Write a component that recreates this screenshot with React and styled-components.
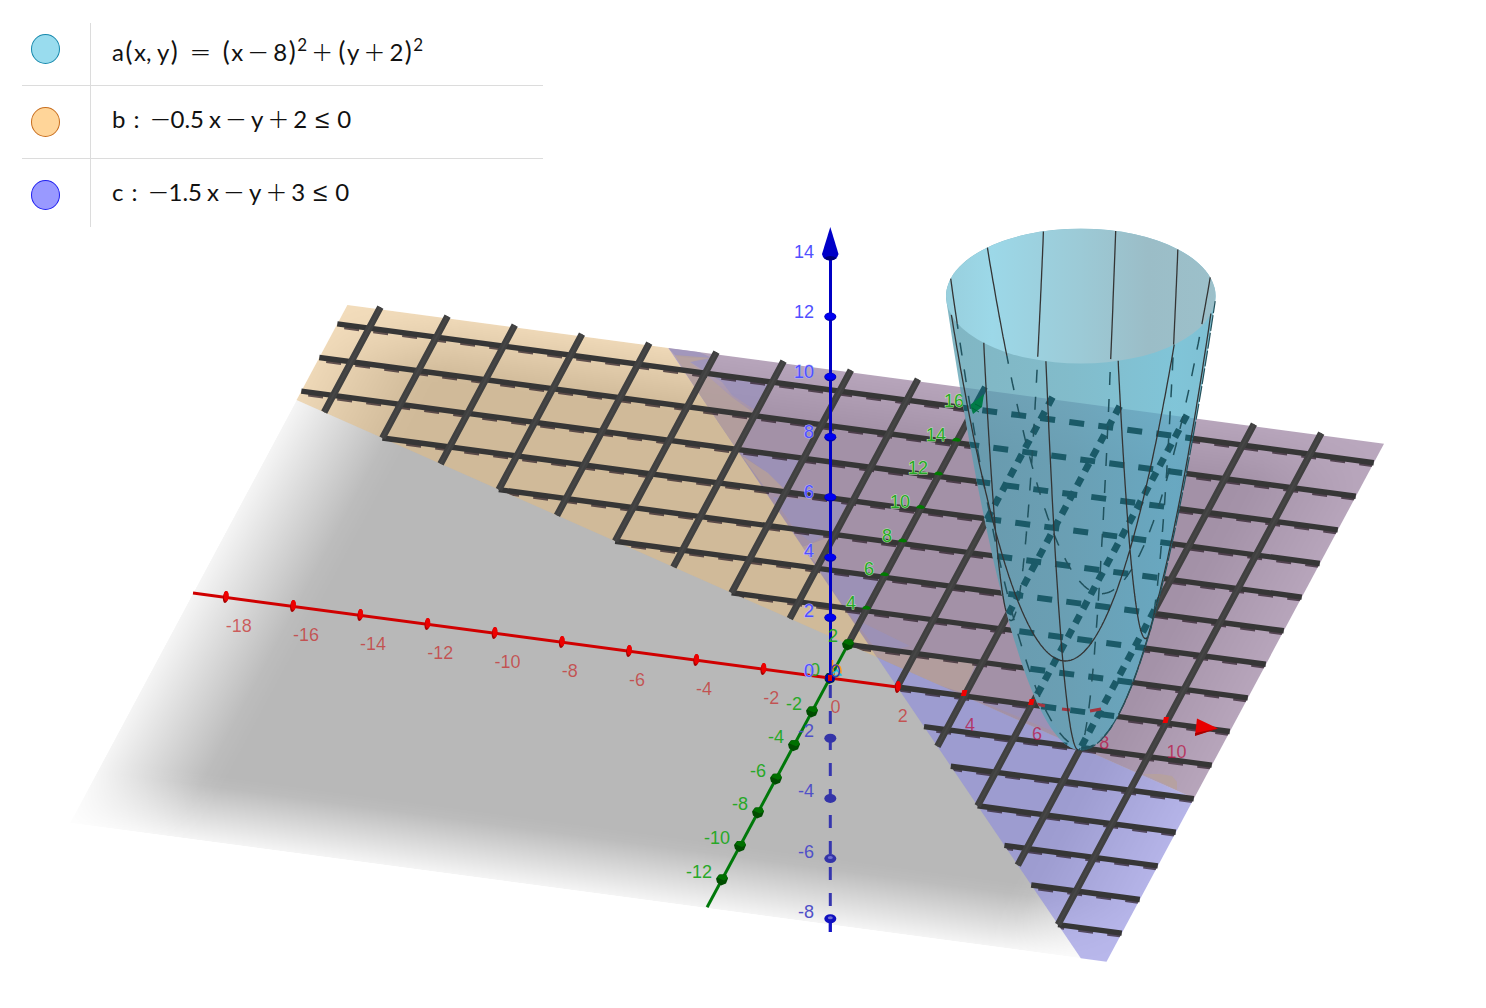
import React from "react";
import styled, { createGlobalStyle } from "styled-components";

const GlobalStyle = createGlobalStyle`
  body { margin: 0; background: #fff; }
`;

const Page = styled.main`
  display: grid;
  min-height: 100vh;
  align-items: start;
  overflow: hidden;
`;

const Scene = styled.svg`
  grid-area: 1 / 1;
  display: block;
  width: 100%;
  height: auto;
`;

const Legend = styled.ul`
  grid-area: 1 / 1;
  z-index: 1;
  width: 521px;
  margin: 23px 0 0 22px;
  padding: 0;
  list-style: none;
`;

const LegendRow = styled.li`
  display: flex;
  border-bottom: 1px solid #dcdcdc;
  &:last-child { border-bottom: 0; }
`;

const MarkerCell = styled.div`
  box-sizing: border-box;
  width: 69px;
  padding: 21px 0 21px 9px;
  border-right: 1px solid #dcdcdc;
  ${LegendRow}:first-child & { padding-top: 11px; }
  ${LegendRow}:last-child & { padding-bottom: 17px; }
`;

const Marker = styled.button`
  display: block;
  box-sizing: border-box;
  width: 29px;
  height: 30px;
  padding: 0;
  border: 1px solid ${(p) => p.$edge};
  border-radius: 50%;
  background: ${(p) => p.$fill};
`;

const Formula = styled.div`
  display: flex;
  align-items: baseline;
  align-self: flex-start;
  padding: 17px 0 0 21px;
  color: #111;
  font: 24px/32px Lato, "Open Sans", sans-serif;
  white-space: pre;
  ${LegendRow}:first-child & { padding-top: 12px; }
`;

const Op = styled.span`
  width: 18px;
  margin: 0 ${(p) => (p.$wide ? 12 : 6)}px;
  font-family: "DejaVu Sans", sans-serif;
  font-size: 26px;
  font-weight: 200;
  display: flex;
  justify-content: center;
`;

const Sign = styled(Op)`
  margin: 0 1px 0 12px;
`;

const Thin = styled.span`
  margin-left: ${(p) => (p.$colon ? 8 : 5)}px;
`;

const Paren = styled.span`
  width: 10px;
  font-size: 26px;
  text-align: center;
`;

const Power = styled.sup`
  align-self: flex-start;
  font-size: 17px;
  line-height: 20px;
`;

const Tag = styled.text`
  font: 18px "Liberation Sans", Arial, sans-serif;
  fill: ${(p) => p.$color};
  stroke: ${(p) => p.$halo || "none"};
  stroke-width: 1px;
  paint-order: stroke;
`;

/* ---- projection ---- */
const X0 = -18.95, X1 = 11.9, Y0 = -13.7, Y1 = 17.13, ZU = 30.1;
const proj = (x, y, z = 0) => [830 + 33.6 * x + 9 * y, 678 + 4.5 * x - 16.8 * y - ZU * z];
const fmt = ([x, y]) => `${x.toFixed(1)},${y.toFixed(1)}`;
const line = (a, b) => `M${fmt(a)}L${fmt(b)}`;
const evens = (a, b) => {
  const out = [];
  for (let i = a; i <= b; i += 2) out.push(i);
  return out;
};

const startX = (y) => Math.max(X0, Math.min(4 - 2 * y, (3 - y) / 1.5));
const startY = (x) => Math.max(Y0, Math.min(2 - 0.5 * x, 3 - 1.5 * x));

const rows = evens(-12, 16).map((y) => ({
  from: proj(startX(y), y),
  edge: proj(X0, y),
  to: proj(X1, y),
}));
const rowPath = rows.map((r) => line(r.from, r.to)).join("");
const columnPath = evens(-18, 10).map((x) => line(proj(x, 17.25), proj(x, startY(x)))).join("");

/* ---- paraboloid ---- */
const CX = 1080.8, VY = 747.6, R = Math.sqrt(15);
const rimY = VY - ZU * 15, RX = 34.8 * R, RY = 17.4 * R;
const silhouette = (() => {
  const w = Math.sqrt(15 - 0.0835);
  const pts = [];
  for (let i = -40; i <= 40; i++) {
    const k = (w * i) / 40;
    pts.push([CX + 34.8 * k, 750.1 - ZU * k * k]);
  }
  return pts;
})();
const bodyPath = `M${silhouette.map(fmt).join("L")}A${RX} ${RY} 0 1 0 ${fmt(silhouette[0])}Z`;
const edgePath = `M${silhouette.slice(40).map(fmt).join("L")}`;

const meshPaths = (() => {
  const solid = [], dashed = [];
  const trace = (point) => {
    let run = null, runVisible = null;
    const flush = () => {
      if (run && run.length > 1) (runVisible ? solid : dashed).push(`M${run.map(fmt).join("L")}`);
    };
    for (let i = 0; i <= 240; i++) {
      const [a, b] = point(i / 240);
      const px = CX + 33.6 * a + 9 * b;
      const py = VY + 4.5 * a - 16.8 * b - ZU * (a * a + b * b);
      const front = (4.5 * a - 16.8 * b) / 17.4 > 0.289;
      const inRim = ((px - CX) / RX) ** 2 + ((py - rimY) / RY) ** 2 < 1.001;
      const visible = front || inRim;
      if (visible !== runVisible) {
        const prev = run && run[run.length - 1];
        flush();
        run = prev ? [prev] : [];
        runVisible = visible;
      }
      run.push([px, py]);
    }
    flush();
  };
  [-2, 0, 2].forEach((k) => {
    const h = Math.sqrt(15 - k * k);
    trace((t) => [k, h - 2 * h * t]);
    trace((t) => [h - 2 * h * t, k]);
  });
  return { solid: solid.join(""), dashed: dashed.join("") };
})();

const overlapPoly = [[-9.4, Y1], [X1, Y1], [X1, -3.975], [1, 1.5]];
const orangePoly = [[X0, Y1], [-9.4, Y1], [1, 1.5], [X0, 11.475]];
const bluePoly = [[1, 1.5], [X1, -3.975], [X1, Y0], [11.133, Y0]];
const poly = (p) => p.map(([x, y]) => fmt(proj(x, y))).join(" ");

const violetPatches = [
  "668,348 697,351 712,358 690,358 676,356",
  "690,362 714,356 708,373 772,383 758,412 732,395 722,382 703,370",
  "740,453 803,458 783,488 767,473",
  "773,497 847,503 833,530 812,543 795,530",
  "820,570 880,578 864,607 857,620 910,646 897,649 880,655 838,598",
  "970,697 1037,705 1062,735",
];
const brownPatches = [
  "675,355 712,358 690,362 703,372 733,398 754,413 740,453 712,415 690,380",
  "742,456 768,473 785,490 765,488",
  "802,547 830,537 820,568",
  "857,649 897,649 976,663 963,693 920,679 877,657",
  "1143,774 1160,774 1172,776 1177,782 1177,790",
];

function Grid() {
  return (
    <g fill="none" mask="url(#outsideShell)">
      <g stroke="#2c1e28" strokeOpacity="0.72" strokeWidth="3" clipPath="url(#gridArea)">
        {rows.map((r) => (
          <path
            key={r.edge[1]}
            transform="translate(0 3)"
            strokeDasharray="15 14.26"
            strokeDashoffset="-7"
            d={line(r.edge, r.to)}
          />
        ))}
      </g>
      <path d={rowPath} stroke="#363636" strokeWidth="5.4" />
      <path d={columnPath} stroke="#404040" strokeWidth="6.8" />
      <path d={columnPath} stroke="#464646" strokeWidth="2" />
    </g>
  );
}

function Axes() {
  return (
    <g>
      <path d={line(proj(0, 2), proj(0, -13.65))} stroke="#00780a" strokeWidth="3" />
      {evens(-12, 2).map((k) => {
        const [x, y] = proj(0, k);
        return (
          <g key={k} transform={`translate(${x} ${y})`}>
            <path d="M-6,-1L-3,-5L4,-5L6,-1L4,4L-1,6L-5,3Z" fill="#004d00" />
            <path d="M-5,-2L-2,-5L4,-5L6,-1L2,1Z" fill="#007000" />
          </g>
        );
      })}
      {evens(4, 14).map((k) => {
        const [x, y] = proj(0, k);
        return <path key={k} d={`M${x - 4},${y - 2}q1,-3 4,-3q4,0 5,3l-3,1z`} fill="#007a00" />;
      })}
      <path d="M830.3,685V932" stroke="#3636ae" strokeWidth="3" strokeDasharray="13 13" />
      <path d="M830.3,918V932" stroke="#1414c8" strokeWidth="3" />
      {evens(-8, -2).map((k) => {
        const y = proj(0, 0, k)[1];
        return (
          <g key={k}>
            <ellipse cx="830.3" cy={y} rx="6" ry="4.5" fill={k === -8 ? "#1010c0" : "#3434a8"} />
            {k < -4 && <ellipse cx="830.3" cy={y - 1} rx="2.5" ry="1.5" fill="#7070d0" />}
          </g>
        );
      })}
      <path d="M193,593L899,687.2" stroke="#d00000" strokeWidth="3" />
      {evens(-18, 2).map((k) => {
        const [x, y] = proj(k, 0);
        return k ? (
          <g key={k}>
            <ellipse cx={x + 0.5} cy={y} rx="2.7" ry="6" fill="#a80000" transform={`rotate(8 ${x} ${y})`} />
            <ellipse cx={x + 1} cy={y - 1} rx="2.5" ry="5" fill="#ee0000" />
          </g>
        ) : null;
      })}
      {[4, 6, 10].map((k) => {
        const [x, y] = proj(k, 0);
        return <path key={k} d={`M${x - 2},${y - 6}h5l-1.5,6h-5z`} fill="#f00000" />;
      })}
      <circle cx="830" cy="678" r="5" fill="#00009a" />
      <path d="M830.500,678V250" stroke="#0000c4" strokeWidth="3" />
      {evens(2, 12).map((k) => (
        <g key={k}>
          <ellipse cx="830.3" cy={proj(0, 0, k)[1]} rx="6" ry="4.2" fill="#0000b0" />
          <ellipse cx="830.3" cy={proj(0, 0, k)[1] - 0.5} rx="5.5" ry="3.3" fill="#0000f0" />
        </g>
      ))}
      <path d="M830.3,227L838.5,254Q837,260 830,260.500Q823,260 822,254Z" fill="#0000c8" />
      <path d="M824,258Q830,254 837,258Q830,263 824,258Z" fill="#000078" />
      <rect x="828" y="675" width="4" height="6" fill="#e00000" />
      <path d="M1197,718.5L1218,728.500L1195,735.500Z" fill="#e80000" />
      <path d="M1195,733L1218,728.500L1195,736Z" fill="#a80000" />
    </g>
  );
}

function OriginCluster() {
  return (
    <g fill="none" strokeWidth="1.5">
      <path d="M832.5,660V670M838,668l2,-2" stroke="#ff9a1a" />
      <ellipse cx="837" cy="671" rx="4" ry="6" stroke="#ff9a1a" />
      <path d="M832,674l5,-4l4,5l-7,1" stroke="#19c3e6" />
      <ellipse cx="835.500" cy="671" rx="4" ry="6" stroke="#4438a0" />
      <circle cx="835" cy="669" r="1.5" fill="#063" stroke="none" />
    </g>
  );
}

function Paraboloid() {
  return (
    <g>
      <path d={bodyPath} fill="url(#shell)" />
      <ellipse cx={CX} cy={rimY} rx={RX} ry={RY} fill="url(#inside)" />
      <g clipPath="url(#shellArea)" fill="none" stroke="#1b5a68">
        <g strokeWidth="6">
          {rows.map((r) => (
            <path key={r.edge[1]} strokeDasharray="15 14.26" strokeDashoffset="-7" d={line(r.edge, r.to)} />
          ))}
        </g>
        <g strokeWidth="6.8" strokeDasharray="9 7.2">
          {[2, 4, 6, 8].map((k) => (
            <path key={k} d={line(proj(k, 17.25), proj(k, -2))} />
          ))}
        </g>
        <path d="M985,387L973,409" strokeWidth="6" />
        <path d="M1032,703L1045,706M1062,709L1070,710M1090,711L1101,709" stroke="#a33540" strokeWidth="3" />
      </g>
      <path d="M970,405L984,394L982,407L973,414Z" fill="#007b48" />
      <path d="M972,408l7,4M975,404l6,3" stroke="#00633c" fill="none" />
      <g fill="none">
        <path d={meshPaths.dashed} stroke="#20525e" strokeWidth="1.5" strokeDasharray="13 14" strokeDashoffset="14" />
        <path d={meshPaths.solid} stroke="#343434" strokeWidth="1.3" />
        <path d={edgePath} stroke="#24525c" strokeWidth="1.2" strokeDasharray="16 2" />
      </g>
    </g>
  );
}

function AxisLabels() {
  return (
    <g>
      {evens(-18, 10).map((k) => {
        const [x, y] = proj(k, 0);
        return (
          <Tag key={k} x={x + 0.5} y={y + 34.5} $color={k > 2 ? "rgba(184,20,70,.75)" : "rgba(200,30,30,.66)"}>
            {k}
          </Tag>
        );
      })}
      {evens(-12, 16).map((k) => {
        const [x, y] = proj(0, k);
        return (
          <Tag key={k} x={x - 10} y={y - 2} textAnchor="end" $color="#28a828" $halo={k > 2 ? "#c4e4bc" : "none"}>
            {k}
          </Tag>
        );
      })}
      {evens(-8, 14).map((k) => (
        <Tag
          key={k}
          x="814"
          y={proj(0, 0, k)[1] + (k < 6 ? -1 : 1)}
          textAnchor="end"
          $color={k < 0 ? "#5050c8" : "#5050ff"}
          $halo={k >= 0 && k < 12 ? "#b4b4f4" : "none"}
        >
          {k}
        </Tag>
      ))}
    </g>
  );
}

function FadeStops() {
  return (
    <>
      <stop offset="0" stopColor="#fff" stopOpacity="0.14" />
      <stop offset="0.04" stopColor="#fff" stopOpacity="0.46" />
      <stop offset="0.1" stopColor="#fff" stopOpacity="0.94" />
      <stop offset="0.12" stopColor="#fff" stopOpacity="1" />
      <stop offset="0.88" stopColor="#fff" stopOpacity="1" />
      <stop offset="0.9" stopColor="#fff" stopOpacity="0.94" />
      <stop offset="0.96" stopColor="#fff" stopOpacity="0.46" />
      <stop offset="1" stopColor="#fff" stopOpacity="0.14" />
    </>
  );
}

function Plot() {
  const sheet = { x: X0, y: Y0, width: X1 - X0, height: Y1 - Y0 };
  return (
    <Scene viewBox="0 0 1486 1008" role="img" aria-label="3D graph of a paraboloid and two half planes">
      <defs>
        <linearGradient id="fadeX">{FadeStops()}</linearGradient>
        <linearGradient id="fadeY" x2="0" y2="1">{FadeStops()}</linearGradient>
        <mask id="maskX" maskUnits="userSpaceOnUse" {...sheet}>
          <rect {...sheet} fill="url(#fadeX)" />
        </mask>
        <mask id="maskY" maskUnits="userSpaceOnUse" {...sheet}>
          <rect {...sheet} fill="url(#fadeY)" />
        </mask>
        <mask id="outsideShell" maskUnits="userSpaceOnUse" x="0" y="0" width="1486" height="1008">
          <rect width="1486" height="1008" fill="#fff" />
          <path d={bodyPath} fill="#000" />
        </mask>
        <linearGradient id="shell">
          <stop offset="0" stopColor="rgb(84,156,174)" stopOpacity="0.74" />
          <stop offset="0.45" stopColor="rgb(86,164,184)" stopOpacity="0.74" />
          <stop offset="0.85" stopColor="rgb(84,176,202)" stopOpacity="0.74" />
          <stop offset="1" stopColor="rgb(82,170,196)" stopOpacity="0.74" />
        </linearGradient>
        <linearGradient id="inside">
          <stop offset="0" stopColor="#98cfdd" />
          <stop offset="0.17" stopColor="#9cd8e8" />
          <stop offset="0.5" stopColor="#9ccad6" />
          <stop offset="0.75" stopColor="#9bbdc7" />
          <stop offset="1" stopColor="#9cc0ca" />
        </linearGradient>
        <clipPath id="gridArea">
          <polygon points={poly([[X0, Y1], [X1, Y1], [X1, Y0], [11.133, Y0], [1, 1.5], [X0, 11.475]])} />
        </clipPath>
        <clipPath id="overlapArea">
          <polygon points={poly(overlapPoly)} />
        </clipPath>
        <clipPath id="shellArea">
          <path d={bodyPath} />
        </clipPath>
      </defs>

      <g transform="matrix(33.6 4.5 9 -16.8 830 678)">
        <g mask="url(#maskX)">
          <rect {...sheet} fill="#000" fillOpacity="0.28" mask="url(#maskY)" />
        </g>
      </g>

      <polygon points={poly(orangePoly)} fill="rgb(231,187,121)" fillOpacity="0.5" />
      <polygon points={poly(bluePoly)} fill="rgb(138,136,223)" fillOpacity="0.6" />
      <polygon points={poly(overlapPoly)} fill="rgb(152,125,158)" fillOpacity="0.67" />
      <g clipPath="url(#overlapArea)">
        {violetPatches.map((p) => (
          <polygon key={p} points={p} fill="#9a92bc" fillOpacity="0.72" />
        ))}
        {brownPatches.map((p) => (
          <polygon key={p} points={p} fill="#b7a299" fillOpacity="0.75" />
        ))}
      </g>

      <Grid />
      <Axes />
      <OriginCluster />
      <AxisLabels />
      <Paraboloid />
    </Scene>
  );
}

export default function App() {
  return (
    <Page>
      <GlobalStyle />
      <Plot />
      <Legend>
        <LegendRow>
          <MarkerCell>
            <Marker type="button" aria-label="Toggle a" $fill="#99dcee" $edge="#1588ac" />
          </MarkerCell>
          <Formula>
            a<Paren>(</Paren>x, y<Paren>)</Paren>
            <Op $wide>=</Op>
            <Paren>(</Paren>x<Op>−</Op>8<Paren>)</Paren>
            <Power>2</Power>
            <Op>+</Op>
            <Paren>(</Paren>y<Op>+</Op>2<Paren>)</Paren>
            <Power>2</Power>
          </Formula>
        </LegendRow>
        <LegendRow>
          <MarkerCell>
            <Marker type="button" aria-label="Toggle b" $fill="#ffd599" $edge="#c86e1e" />
          </MarkerCell>
          <Formula>
            b<Thin $colon>:</Thin>
            <Sign>−</Sign>0.5<Thin>x</Thin>
            <Op>−</Op>y<Op>+</Op>2<Op>≤</Op>0
          </Formula>
        </LegendRow>
        <LegendRow>
          <MarkerCell>
            <Marker type="button" aria-label="Toggle c" $fill="#9999ff" $edge="#2020f0" />
          </MarkerCell>
          <Formula>
            c<Thin $colon>:</Thin>
            <Sign>−</Sign>1.5<Thin>x</Thin>
            <Op>−</Op>y<Op>+</Op>3<Op>≤</Op>0
          </Formula>
        </LegendRow>
      </Legend>
    </Page>
  );
}
